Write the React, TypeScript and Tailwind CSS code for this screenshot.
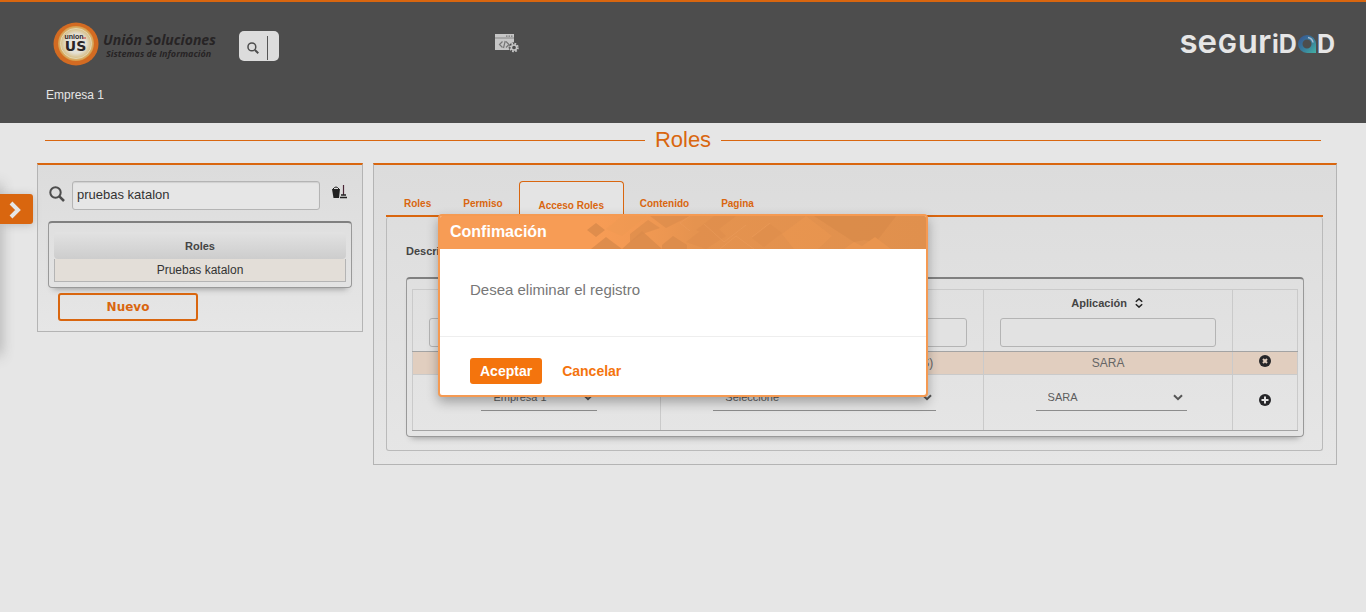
import React from "react";

function SearchIcon({ className }: { className: string }) {
  return (
    <svg viewBox="0 0 16 16" className={className} fill="none" stroke="currentColor" aria-hidden="true">
      <circle cx="6.5" cy="6.5" r="5.2" strokeWidth="2" />
      <path d="M10.6 10.6 15 15" strokeWidth="2.6" />
    </svg>
  );
}

function ChevronDown({ className }: { className: string }) {
  return (
    <svg viewBox="0 0 10 7" className={className} fill="none" stroke="currentColor" strokeWidth="2" aria-hidden="true">
      <path d="M1 1.2 5 5.2 9 1.2" />
    </svg>
  );
}

function SortIcon() {
  return (
    <svg viewBox="0 0 8 10" className="h-[10px] w-2" fill="none" stroke="#222" strokeWidth="1.5" aria-hidden="true">
      <path d="M.8 3.8 4 .9 7.2 3.8M.8 6.2 4 9.1 7.2 6.2" />
    </svg>
  );
}

function BrandLogo() {
  return (
    <svg viewBox="0 0 46 44" className="h-11 w-[46px]" aria-hidden="true">
      <defs>
        <radialGradient id="ring">
          <stop offset="0" stopColor="#e6e6e6" />
          <stop offset=".55" stopColor="#e4e0d4" />
          <stop offset=".8" stopColor="#d9c391" />
          <stop offset="1" stopColor="#d89a45" />
        </radialGradient>
      </defs>
      <ellipse cx="23" cy="22" rx="22.5" ry="21.5" fill="#d36b22" />
      <ellipse cx="23" cy="21.5" rx="18" ry="17.5" fill="url(#ring)" />
      <ellipse cx="23" cy="21.5" rx="15.5" ry="15" fill="none" stroke="#e2d6b0" strokeWidth="1" />
      <text x="21" y="17" textAnchor="middle" fontFamily="Liberation Sans" fontWeight="700" fontSize="7" fill="#2b2526">union</text>
      <path d="M30 16h3" stroke="#c33" strokeWidth="1" />
      <text x="22.5" y="28.500" textAnchor="middle" fontFamily="DejaVu Sans" fontWeight="700" fontSize="14" fill="#2b2526">US</text>
    </svg>
  );
}

function WindowGearIcon() {
  return (
    <svg viewBox="0 0 24 20" className="h-5 w-6" aria-hidden="true">
      <path d="M0 0h19v16H0z" fill="#c6c6c6" />
      <path d="M0 4h19" stroke="#777" strokeWidth=".8" />
      <path d="M11 2.200h1.500M13.500 2.200H15M16 2.200h1.500" stroke="#777" strokeWidth="1.300" />
      <path d="M7.500 7.500 4.500 10.500l3 3M11 7.500l3 3-3 3M10.200 7 8.500 14" stroke="#777" strokeWidth="1.200" fill="none" />
      <circle cx="19" cy="13.500" r="5.300" fill="#4d4d4d" />
      <circle cx="19" cy="13.500" r="3.900" fill="none" stroke="#c6c6c6" strokeWidth="1.800" strokeDasharray="1.700 1.360" />
      <circle cx="19" cy="13.500" r="2.600" fill="none" stroke="#c6c6c6" strokeWidth="1.500" />
    </svg>
  );
}

function SeguridadLogo() {
  return (
    <div aria-label="Seguridad" className="mb-[7px] flex h-7 items-baseline gap-px font-['Inter',sans-serif] leading-7 text-[#e6e6e6]">
      <span className="text-[33px] font-semibold leading-7">se</span>
      <span className="text-[25px] font-bold leading-7">G</span>
      <span className="text-[33px] font-semibold leading-7">ur</span>
      <span className="text-[25px] font-bold leading-7">iD</span>
      <svg viewBox="0 0 18 18" className="h-[18px] w-[18px]" aria-hidden="true">
        <defs>
          <linearGradient id="drop" x1="0" y1="0" x2="1" y2="1">
            <stop offset="0" stopColor="#38508f" />
            <stop offset=".5" stopColor="#37799b" />
            <stop offset="1" stopColor="#43b0a4" />
          </linearGradient>
        </defs>
        <path fillRule="evenodd" d="M9 0a9 9 0 0 0 0 18h9V9a9 9 0 0 0-9-9Zm0 4.500a4.500 4.500 0 1 1 0 9 4.500 4.500 0 0 1 0-9Z" fill="url(#drop)" />
        <path d="M10 2.500a6 6 0 0 1 5 5" stroke="#a5b9cf" strokeWidth="1.500" fill="none" />
      </svg>
      <span className="text-[25px] font-bold leading-7">D</span>
    </div>
  );
}

function Header() {
  return (
    <header className="h-[123px] border-t-2 border-[#d9660f] bg-[#4d4d4d] pl-[46px] pr-[31px]">
      <div className="flex h-[78px] items-center pt-[6px]">
        <div className="flex w-[193px] items-center gap-1 pl-[7px]">
          <BrandLogo />
          <div className="whitespace-nowrap pt-1 font-['Open_Sans',sans-serif] font-bold italic text-[#272425]">
            <div className="text-[14px] leading-4">Unión Soluciones</div>
            <div className="pl-[3px] text-[9px] leading-3">Sistemas de Información</div>
          </div>
        </div>
        <button aria-label="Buscar" className="mt-1 flex h-[30px] w-10 items-center rounded-[5px] bg-[#dcdcdc] pl-2 text-[#4d4d4d]">
          <SearchIcon className="mt-1 h-3 w-3" />
          <span className="ml-2 mt-1 h-6 w-px bg-[#555]" />
        </button>
        <div className="ml-[216px] flex-1">
          <WindowGearIcon />
        </div>
        <SeguridadLogo />
      </div>
      <p className="pt-[7px] text-xs leading-4 text-[#e6e6e6]">Empresa 1</p>
    </header>
  );
}

function RoleList() {
  return (
    <section className="h-[169px] w-[326px] shrink-0 border border-t-2 border-[#b4b4b4] border-t-[#d9660f] bg-linear-to-b from-[#dcdcdc] to-[#e6e6e6] px-[10px] pt-4">
      <div className="flex items-center">
        <SearchIcon className="mb-1 ml-px h-4 w-4 text-[#4d4d4d]" />
        <input
          aria-label="Buscar rol"
          defaultValue="pruebas katalon"
          className="ml-[7px] h-[29px] w-[248px] rounded-[3px] border border-[#b4b4b4] bg-[#e6e6e6] px-1 pb-0.5 text-[13px] text-[#333] shadow-[inset_0_1px_1px_#d0d0d0]"
        />
        <button aria-label="Limpiar" className="mb-2 ml-3">
          <svg viewBox="0 0 15 16" className="h-4 w-[15px]">
            <path d="M0 5h8l-1 9H1.500z" fill="#222" />
            <path d="M1 5q3-4 6 0" fill="none" stroke="#222" />
            <path d="M11.500 1v10" stroke="#4a2535" strokeWidth="1.200" />
            <path d="M9 11h5M8 13.500h7" stroke="#222" strokeWidth="1.500" />
          </svg>
        </button>
      </div>
      <div className="mt-[11px] h-[67px] rounded border border-t-2 border-[#999] border-t-[#808080] px-[5px] pt-[9px] shadow-[0_6px_6px_-5px_#999]">
        <table className="w-full border-separate border-spacing-0 text-center">
          <thead>
            <tr>
              <th className="h-[27px] rounded bg-linear-to-b from-[#e2e2e2] to-[#cdcdcd] p-0 pt-0.5 text-[11px] font-bold text-[#444]">Roles</th>
            </tr>
          </thead>
          <tbody>
            <tr>
              <td className="h-[23px] border border-t-0 border-[#b4b4b4] bg-[#e3ded8] p-0 text-xs leading-4 text-[#333]">Pruebas katalon</td>
            </tr>
          </tbody>
        </table>
      </div>
      <button className="ml-[10px] mt-[5px] block h-7 w-[140px] rounded-[3px] border-2 border-[#d9660f] font-['DejaVu_Sans',sans-serif] text-xs font-bold text-[#d9660f]">
        Nuevo
      </button>
    </section>
  );
}

const tabs = ["Roles", "Permiso", "Acceso Roles", "Contenido", "Pagina"];

function Tabs() {
  return (
    <div role="tablist" className="flex h-9 items-end border-b-2 border-[#d9660f] pl-0.5 text-[10px] font-bold text-[#d9660f]">
      {tabs.map((name) => {
        const active = name === "Acceso Roles";
        return (
          <button
            key={name}
            role="tab"
            aria-selected={active}
            className={
              active
                ? "h-[34px] w-[105px] rounded-t border border-b-0 border-[#d9660f] bg-[#e4e4e4] pt-[14px]"
                : "h-[34px] px-4 pt-[10px]"
            }
          >
            {name}
          </button>
        );
      })}
    </div>
  );
}

function Picker({ label, value, className }: { label: string; value: string; className: string }) {
  return (
    <div className={className}>
      <div className="grid w-full items-center border-b border-[#8c8c8c]">
        <select aria-label={label} className="col-start-1 row-start-1 h-[26px] w-full appearance-none pl-3 text-[11px] text-[#5c5c5c]">
          <option>{value}</option>
        </select>
        <ChevronDown className="pointer-events-none col-start-1 row-start-1 mr-1 h-[7px] w-[10px] justify-self-end text-[#555]" />
      </div>
    </div>
  );
}

const headCell = "h-[62px] border border-[#cacaca] border-b-[#a3a3a3] px-4 py-0 align-top pt-[5px]";
const rowCell = "h-[23px] border border-[#cacaca] border-t-[#a3a3a3] p-0";
const addCell = "h-14 border border-[#cacaca] border-b-[#a3a3a3] p-0 align-top";
const pickCell = "h-14 border border-[#cacaca] border-b-[#a3a3a3] p-0 pl-[6px] align-top";

function FilterHead({ title }: { title: string }) {
  return (
    <th className={headCell}>
      <div className="flex items-center justify-center gap-2 pr-0.5 text-[11px] leading-4 text-[#444]">
        {title}
        <SortIcon />
      </div>
      <input aria-label={"Filtrar " + title} className="mt-[7px] block h-[29px] w-full rounded-[3px] border border-[#b4b4b4] bg-[#e2e2e2]" />
    </th>
  );
}

function AccessTable() {
  return (
    <div className="rounded border border-t-2 border-[#999] border-t-[#808080] px-[5px] pb-[5px] pt-[10px] shadow-[0_6px_6px_-5px_#999]">
      <table className="w-full table-fixed border-collapse text-center text-xs leading-4 text-[#666]">
        <colgroup>
          <col className="w-[28%]" />
          <col className="w-[36.5%]" />
          <col className="w-[28.2%]" />
          <col />
        </colgroup>
        <thead>
          <tr>
            <FilterHead title="Empresa" />
            <FilterHead title="Sistema" />
            <FilterHead title="Aplicación" />
            <th className={headCell} />
          </tr>
        </thead>
        <tbody>
          <tr className="bg-[#e1cebf]">
            <td className={rowCell} />
            <td className={rowCell}>Administrador de roles y acceso (SARAS)</td>
            <td className={rowCell}>SARA</td>
            <td className={rowCell}>
              <button aria-label="Eliminar" className="mx-auto mb-1 block">
                <svg viewBox="0 0 12 12" className="h-3 w-3">
                  <circle cx="6" cy="6" r="6" fill="#262629" />
                  <path d="m4 4 4 4M8 4 4 8" stroke="#e1cebf" strokeWidth="2" />
                </svg>
              </button>
            </td>
          </tr>
          <tr>
            <td className={pickCell}>
              <Picker label="Empresa" value="Empresa 1" className="mx-auto mt-[9px] flex w-[116px]" />
            </td>
            <td className={pickCell}>
              <Picker label="Sistema" value="Seleccione" className="mx-auto mt-[9px] flex w-[223px]" />
            </td>
            <td className={pickCell}>
              <Picker label="Aplicación" value="SARA" className="mx-auto mt-[9px] flex w-[151px]" />
            </td>
            <td className={addCell}>
              <button aria-label="Agregar" className="mx-auto mt-[19px] block">
                <svg viewBox="0 0 12 12" className="h-3 w-3">
                  <circle cx="6" cy="6" r="6" fill="#262629" />
                  <path d="M6 2.500v7M2.500 6h7" stroke="#e4e4e4" strokeWidth="2" />
                </svg>
              </button>
            </td>
          </tr>
        </tbody>
      </table>
    </div>
  );
}

function ConfirmDialog() {
  return (
    <div role="dialog" aria-labelledby="confirm-title" className="absolute left-1/2 top-[214px] w-[490px] -translate-x-1/2 overflow-hidden rounded border-2 border-[#f59a52] bg-white shadow-[0_5px_12px_rgba(0,0,0,0.3)]">
      <div className="grid h-[33px] items-center bg-[#f79c55]">
        <svg viewBox="0 0 340 33" className="col-start-1 row-start-1 h-[33px] w-[340px] justify-self-end" aria-hidden="true">
          <defs>
            <linearGradient id="fade">
              <stop offset="0" stopColor="#ee9751" stopOpacity="0" />
              <stop offset=".3" stopColor="#e5934f" />
              <stop offset="1" stopColor="#e0904d" />
            </linearGradient>
          </defs>
          <path d="M10 0h330v33H10z" fill="url(#fade)" />
          <path d="m1 14 9-7 9 7-9 7zM5 33l15-12 16 12zM36 33l20-18 20 18zM76 29l11-9 14 9v4H76z" fill="#dc8c4b" opacity=".9" />
          <path d="m44 18 18-14 12 8-18 6-12 8zM64 0h40L80 12z" fill="#dc8c4b" opacity=".7" />
          <path d="m100 26 26-20 14 14-20 13zM110 14 128 0h22l-26 20zM166 22l18-14 12 9-18 14z" fill="#dc8c4b" opacity=".45" />
          <path d="m20 13 16-13h24L36 20zM196 18 220 0l26 20-14 13h-24z" fill="#ee9853" opacity=".45" />
          <path d="m228 0 40 26 10-2 12 2 20-26z" fill="#d98b4a" opacity=".85" />
          <path d="m258 33 10-7 8 4 13-9 16 12z" fill="#e9954f" />
          <path d="m94 7 10-7M94 7l10 8M118 8l20 18 22-17M134 33l16-13 18 13M166 21l18-14" stroke="#eb9d5b" strokeWidth=".8" fill="none" opacity=".7" />
        </svg>
        <h2 id="confirm-title" className="z-10 col-start-1 row-start-1 pb-0.5 pl-[10px] text-base font-bold leading-5 text-white">Confimación</h2>
      </div>
      <p className="h-[88px] border-b border-[#eee] px-[30px] pt-[31px] text-[15px] leading-5 text-[#777]">Desea eliminar el registro</p>
      <div className="flex gap-[10px] px-[30px] pb-[11px] pt-[21px] text-sm font-bold">
        <button className="h-[26px] rounded-[3px] bg-[#f4740d] px-[10px] text-white">Aceptar</button>
        <button className="h-[26px] px-[10px] text-[#f4740d]">Cancelar</button>
      </div>
    </div>
  );
}

export default function App() {
  return (
    <div className="relative min-h-screen overflow-hidden bg-[#e6e6e6] font-['Liberation_Sans',Arial,sans-serif]">
      <Header />
      <main className="pl-[37px] pr-[29px]">
        <div className="flex h-10 items-center gap-[10px] pb-[6px] pl-2 pr-4 text-[#d9660f]">
          <span className="h-px flex-1 bg-[#d9660f]" />
          <h1 className="text-[22px] leading-7">Roles</h1>
          <span className="h-px flex-1 bg-[#d9660f]" />
        </div>
        <div className="flex items-start gap-[10px]">
          <RoleList />
          <section className="flex-1 border border-t-2 border-[#b4b4b4] border-t-[#d9660f] bg-linear-to-b from-[#dcdcdc] to-[#e6e6e6] pb-[13px] pl-3 pr-[13px] pt-4">
            <Tabs />
            <div className="rounded-[3px] border border-t-0 border-[#bababa] pb-[13px] pl-[19px] pr-[18px]">
              <p className="pb-[18px] pt-[26px] text-[11px] font-bold leading-4 text-[#444]">Descripción</p>
              <AccessTable />
            </div>
          </section>
        </div>
      </main>
      <div className="absolute -left-2 top-[185px] h-[170px] w-2 shadow-[0_0_14px_#999]" />
      <button aria-label="Abrir menú" className="absolute left-0 top-[194px] flex h-[30px] w-[33px] items-center rounded-r-[3px] bg-[#d9660f] pl-[9px] pt-0.5 shadow-[0_1px_8px_#bbb]">
        <svg viewBox="0 0 13 18" className="h-[18px] w-[13px]" fill="none" stroke="#e6e6e6" strokeWidth="4">
          <path d="m2 2 7 7-7 7" />
        </svg>
      </button>
      <ConfirmDialog />
    </div>
  );
}
